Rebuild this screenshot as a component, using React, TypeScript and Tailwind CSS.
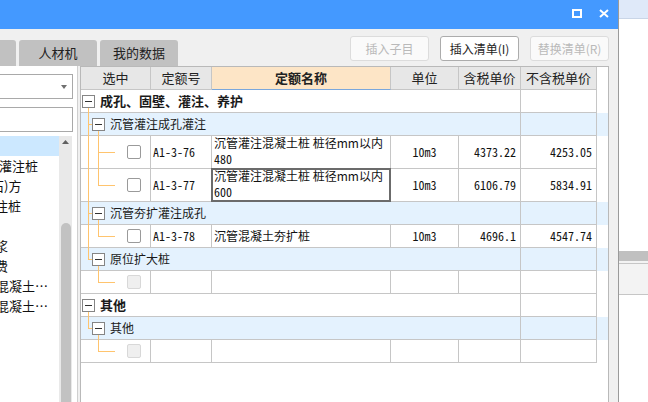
import React from 'react';

type Row =
  | { kind: 'g0'; text: string }
  | { kind: 'g1'; text: string; last?: boolean }
  | {
      kind: 'leaf';
      v0: boolean;
      lastLeaf: boolean;
      code?: string;
      name?: string[];
      unit?: string;
      p1?: string;
      p2?: string;
      selected?: boolean;
    };

const rows: Row[] = [
  { kind: 'g0', text: '成孔、固壁、灌注、养护' },
  { kind: 'g1', text: '沉管灌注成孔灌注' },
  {
    kind: 'leaf',
    v0: true,
    lastLeaf: false,
    code: 'A1-3-76',
    name: ['沉管灌注混凝土桩 桩径mm以内', '480'],
    unit: '10m3',
    p1: '4373.22',
    p2: '4253.05',
  },
  {
    kind: 'leaf',
    v0: true,
    lastLeaf: true,
    code: 'A1-3-77',
    name: ['沉管灌注混凝土桩 桩径mm以内', '600'],
    unit: '10m3',
    p1: '6106.79',
    p2: '5834.91',
    selected: true,
  },
  { kind: 'g1', text: '沉管夯扩灌注成孔' },
  {
    kind: 'leaf',
    v0: true,
    lastLeaf: true,
    code: 'A1-3-78',
    name: ['沉管混凝土夯扩桩'],
    unit: '10m3',
    p1: '4696.1',
    p2: '4547.74',
  },
  { kind: 'g1', text: '原位扩大桩', last: true },
  { kind: 'leaf', v0: false, lastLeaf: true },
  { kind: 'g0', text: '其他' },
  { kind: 'g1', text: '其他', last: true },
  { kind: 'leaf', v0: false, lastLeaf: true },
];

// left list is scrolled sideways, so most labels start off the left edge
const listItems = [
  { text: '', ml: 'ml-0', selected: true },
  { text: '灌注桩', ml: '-ml-[1px]' },
  { text: '石)方', ml: '-ml-[9px]' },
  { text: '注桩', ml: '-ml-[5px]' },
  { text: '', ml: 'ml-0' },
  { text: '浆', ml: '-ml-[5px]' },
  { text: '费', ml: '-ml-[5px]' },
  { text: '混凝土…', ml: '-ml-[4px]' },
  { text: '混凝土…', ml: '-ml-[4px]' },
];

const grid = 'grid grid-cols-[70px_61px_179px_68px_62px_76px]';
const cell = 'border-r border-b border-[#c6c6c6]';
const mono = "font-['Noto_Sans_Mono_CJK_SC','Liberation_Mono',monospace] text-[12px]";

function Line({ className }: { className: string }) {
  return <div className={`absolute bg-[#ffc46e] ${className}`} />;
}

function Box({ className }: { className: string }) {
  return (
    <div className={`absolute w-[13px] h-[13px] border border-[#858585] bg-white ${className}`}>
      <div className="absolute left-[2px] top-[5px] w-[7px] h-px bg-[#333]" />
    </div>
  );
}

function TableRow({ row }: { row: Row }) {
  if (row.kind === 'g0') {
    return (
      <div className={`${grid} h-[23px] bg-white`}>
        <div className={`${cell} col-span-5 relative flex items-center pl-[19px]`}>
          <Box className="left-[1px] top-[5px]" />
          <Line className="left-[7px] top-[18px] -bottom-px w-px" />
          <span className="text-[13px] font-bold text-[#1a1a1a]">{row.text}</span>
        </div>
        <div className={cell} />
      </div>
    );
  }
  if (row.kind === 'g1') {
    return (
      <div className={`${grid} h-[23px] bg-[#e4f2fe]`}>
        <div className={`${cell} col-span-5 relative flex items-center pl-[29px]`}>
          {row.last ? (
            <Line className="left-[7px] -top-px h-[13px] w-px" />
          ) : (
            <Line className="left-[7px] -top-px -bottom-px w-px" />
          )}
          <Line className="left-[7px] top-[11px] w-[4px] h-px" />
          <Box className="left-[11px] top-[5px]" />
          <Line className="left-[17px] top-[18px] -bottom-px w-px" />
          <span className="text-[12px] text-[#1a1a1a]">{row.text}</span>
        </div>
        <div className={cell} />
      </div>
    );
  }
  const tall = (row.name?.length ?? 0) > 1;
  const mid = tall ? 'top-[16px]' : 'top-[11px]';
  const empty = !row.code;
  return (
    <div className={`${grid} ${tall ? 'h-[33px]' : 'h-[23px]'} bg-white`}>
      <div className={`${cell} relative flex items-center`}>
        {row.v0 && <Line className="left-[7px] -top-px -bottom-px w-px" />}
        {row.lastLeaf ? (
          <Line className={`left-[17px] -top-px w-px ${tall ? 'h-[18px]' : 'h-[13px]'}`} />
        ) : (
          <Line className="left-[17px] -top-px -bottom-px w-px" />
        )}
        <Line className={`left-[17px] ${mid} w-[17px] h-px`} />
        <div
          className={`ml-[46px] w-[14px] h-[14px] rounded-[2px] border ${
            empty ? 'border-[#d8d8d8] bg-[#efefef]' : 'border-[#9a9a9a] bg-white'
          }`}
        />
      </div>
      <div className={`${cell} flex items-center pl-[2px] ${mono} text-[#111]`}>{row.code}</div>
      <div
        className={`${cell} relative flex flex-col pl-[2px] text-[12px] text-[#111] ${
          tall ? 'justify-start' : 'justify-center'
        }`}
      >
        {row.name?.map((n, i) =>
          i === 0 ? (
            <div key={i} className={`whitespace-pre leading-[14px] ${tall ? 'h-[16px]' : ''}`}>
              {n}
            </div>
          ) : (
            <div key={i} className={`${mono} leading-[14px] h-[14px]`}>
              {n}
            </div>
          )
        )}
        {row.selected && <div className="absolute -inset-px border-2 border-[#6b6b6b]" />}
      </div>
      <div className={`${cell} flex items-center justify-center ${mono} text-[#111]`}>{row.unit}</div>
      <div className={`${cell} flex items-center justify-end pr-[4px] ${mono} text-[#111]`}>{row.p1}</div>
      <div className={`${cell} flex items-center justify-end pr-[4px] ${mono} text-[#111]`}>{row.p2}</div>
    </div>
  );
}

export default function App() {
  const headers = ['选中', '定额号', '定额名称', '单位', '含税单价', '不含税单价'];
  return (
    <div className="w-[648px] h-[402px] overflow-hidden flex bg-white font-['Noto_Sans_CJK_SC',sans-serif]">
      {/* window */}
      <div className="w-[619px] h-full flex flex-col border-r border-[#9a9a9a]">
        <div className="h-[29px] shrink-0 bg-[#4499ff] flex items-center justify-end pr-[9px] gap-[17px]">
          <div className="w-[10px] h-[9px] border-2 border-white mt-[-3px]" />
          <svg width="10" height="9" viewBox="0 0 10 9" className="mt-[-3px]">
            <path d="M1 1 L9 8 M9 1 L1 8" stroke="white" strokeWidth="2" />
          </svg>
        </div>
        <div className="flex-1 flex flex-col bg-[#f0f0f0] min-h-0">
          {/* toolbar */}
          <div className="h-[37px] shrink-0 flex justify-between pr-[9px]">
            <div className="flex self-end gap-[3px] text-[13px] text-[#222]">
              <div className="w-[16px] h-[26px] bg-[#c1c1c1] rounded-tr-[3px]" />
              <div className="w-[78px] h-[26px] bg-[#c1c1c1] rounded-t-[3px] flex items-center justify-center">
                人材机
              </div>
              <div className="w-[78px] h-[26px] bg-[#c1c1c1] rounded-t-[3px] flex items-center justify-center">
                我的数据
              </div>
            </div>
            <div className="flex gap-[11px] pt-[7px] text-[12px]">
              <div className="w-[79px] h-[25px] rounded-[3px] border border-[#dcdcdc] bg-[#fafafa] text-[#b9b9b9] flex items-center justify-center">
                插入子目
              </div>
              <div className="w-[79px] h-[25px] rounded-[3px] border border-[#acacac] bg-white text-[#1e1e1e] flex items-center justify-center">
                插入清单(I)
              </div>
              <div className="w-[79px] h-[25px] rounded-[3px] border border-[#dcdcdc] bg-[#fafafa] text-[#b9b9b9] flex items-center justify-center">
                替换清单(R)
              </div>
            </div>
          </div>
          {/* content */}
          <div className="flex-1 flex min-h-0">
            {/* left panel */}
            <div className="w-[78px] shrink-0 bg-white border-r border-[#cfcfcf] flex flex-col pt-[8px]">
              <div className="w-[73px] h-[25px] border border-l-0 border-[#a9a9a9] flex items-center justify-end pr-[5px]">
                <svg width="6" height="4" viewBox="0 0 6 4">
                  <path d="M0 0 H6 L3 4 Z" fill="#707070" />
                </svg>
              </div>
              <div className="w-[73px] h-[25px] border border-l-0 border-[#a9a9a9] mt-[8px]" />
              <div className="flex-1 flex mt-[4px] min-h-0">
                <div className="w-[59px] overflow-hidden text-[13px] text-[#111]">
                  {listItems.map((it, i) => (
                    <div
                      key={i}
                      className={`h-[20px] flex items-center whitespace-nowrap ${it.selected ? 'bg-[#cce8ff]' : ''}`}
                    >
                      <span className={it.ml}>{it.text}</span>
                    </div>
                  ))}
                </div>
                <div className="w-[13px] bg-[#e9e9e9] flex flex-col items-center">
                  <svg width="7" height="4" viewBox="0 0 7 4" className="mt-[4px]">
                    <path d="M0 4 L3.5 0 L7 4 Z" fill="#606060" />
                  </svg>
                  <div className="mt-[79px] w-[10px] flex-1 bg-[#c2c2c2] rounded-t-[5px]" />
                </div>
              </div>
            </div>
            {/* grid */}
            <div className="flex-1 ml-[2px] mr-[9px] bg-white border-l border-t border-r border-[#b9b9b9] overflow-hidden">
              <div className={`${grid} h-[23px] text-[13px] text-[#222]`}>
                {headers.map((h, i) => (
                  <div
                    key={h}
                    className={`border-r flex items-center justify-center ${
                      i === 2
                        ? 'bg-[#fde5c6] font-bold border-b border-b-[#7aa7dc] border-r-[#c6c6c6]'
                        : 'bg-[#e7e7e7] border-b border-[#c6c6c6]'
                    }`}
                  >
                    {h}
                  </div>
                ))}
              </div>
              {rows.map((r, i) => (
                <TableRow key={i} row={r} />
              ))}
            </div>
          </div>
        </div>
      </div>
      {/* outside area */}
      <div className="flex-1 flex flex-col">
        <div className="h-[19px] bg-[#dfe9f9] border-b border-[#c9d5e7]" />
        <div className="h-[232px] bg-white" />
        <div className="h-[10px] bg-[#c0c0c0]" />
        <div className="h-[2px] bg-[#f3f3f3]" />
        <div className="h-[32px] bg-[#f3f3f3] border-t border-b border-[#c6c6c6]" />
        <div className="flex-1 bg-white" />
      </div>
    </div>
  );
}
